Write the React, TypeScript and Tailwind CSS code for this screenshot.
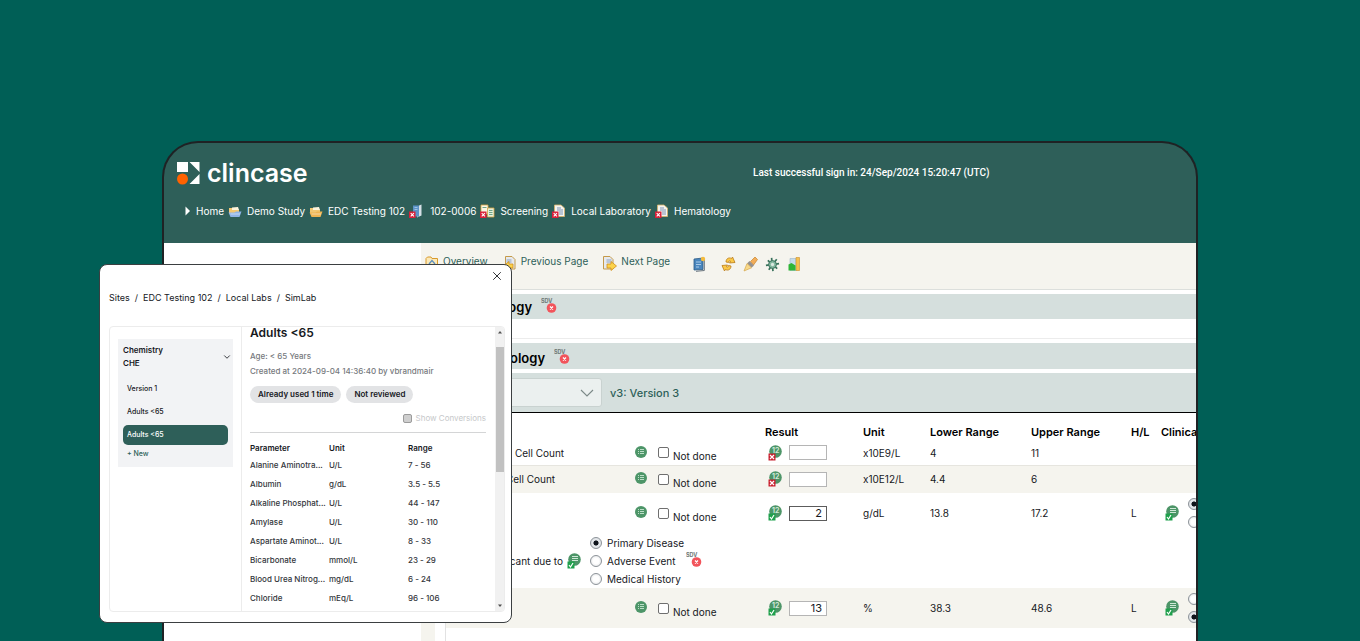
// src/App.tsx
import { useState } from 'react'
import type { ReactNode } from 'react'
import clsx from 'clsx'
import { ChevronDown, X } from 'lucide-react'

type Mark = 'error' | 'ok'

const CRUMBS: { label: string; icon: ReactNode }[] = [
  { label: 'Home',             icon: <ArrowIcon /> },
  { label: 'Demo Study',       icon: <FolderIcon front="#8fb4e8" /> },
  { label: 'EDC Testing 102',  icon: <FolderIcon front="#f0b552" /> },
  { label: '102-0006',         icon: <PatientIcon /> },
  { label: 'Screening',        icon: <VisitIcon /> },
  { label: 'Local Laboratory', icon: <FormIcon /> },
  { label: 'Hematology',       icon: <FormIcon /> },
]

const PARAMETERS = [
  ['Alanine Aminotra...', 'U/L', '7 - 56'],
  ['Albumin', 'g/dL', '3.5 - 5.5'],
  ['Alkaline Phosphat...', 'U/L', '44 - 147'],
  ['Amylase', 'U/L', '30 - 110'],
  ['Aspartate Aminot...', 'U/L', '8 - 33'],
  ['Bicarbonate', 'mmol/L', '23 - 29'],
  ['Blood Urea Nitrog...', 'mg/dL', '6 - 24'],
  ['Chloride', 'mEq/L', '96 - 106'],
]

export default function App() {
  return (
    <div className="relative flex h-screen flex-col overflow-hidden bg-[#005f56] px-4 pt-[141px] font-['Inter',sans-serif] text-[11px] leading-4 text-[#16181d]">
      <div className="relative mx-auto flex w-full max-w-[1036px] flex-1 flex-col">
        <div className="flex min-h-0 flex-1 flex-col overflow-hidden rounded-t-[36px] border-2 border-b-0 border-[#1f2224] bg-[#2e5f59]">
          <Header />
          <div className="flex min-h-0 flex-1 bg-white">
            <aside className="w-[257px] shrink-0" />
            <main className="flex min-w-0 flex-1 flex-col bg-[#f5f4ee]">
              <Toolbar />
              <Forms />
            </main>
          </div>
        </div>
        <LabDialog />
      </div>
    </div>
  )
}

// ── Header ────────────────────────────────────────────────────────
function Header() {
  return (
    <header className="h-[100px] shrink-0 pl-[13px] text-[10px] text-white">
      <div className="flex items-center pt-4">
        <div className="flex w-[576px] shrink-0 items-center gap-[7px]">
          <LogoMark />
          <span className="text-[25px] leading-7 font-semibold">clincase</span>
        </div>
        <p className="font-['Roboto',sans-serif] font-medium whitespace-nowrap">Last successful sign in: 24/Sep/2024 15:20:47 (UTC)</p>
      </div>
      <nav aria-label="Breadcrumb" className="mt-4 flex items-center gap-1 pl-2">
        {CRUMBS.map(c => (
          <a key={c.label} href="#" className="flex items-center gap-[5px] whitespace-nowrap">
            {c.icon}
            {c.label}
          </a>
        ))}
      </nav>
    </header>
  )
}

// ── Toolbar ───────────────────────────────────────────────────────
function Toolbar() {
  return (
    <div className="flex h-[47px] shrink-0 items-start gap-[14px] border-b border-[#dcdfdc] pt-[10px] pl-1 text-[10px] text-[#2e5f59]">
      <a href="#" className="flex items-start gap-1"><OverviewIcon />Overview</a>
      <a href="#" className="flex items-start gap-1"><PageIcon dir="prev" />Previous Page</a>
      <a href="#" className="flex items-start gap-1"><PageIcon dir="next" />Next Page</a>
      <div className="flex items-center gap-[7px] pt-[3px] pl-2">
        <button aria-label="Notes" className="mr-2"><BookIcon /></button>
        <button aria-label="Refresh"><RefreshIcon /></button>
        <button aria-label="Highlight"><BrushIcon /></button>
        <button aria-label="Settings"><GearIcon /></button>
        <button aria-label="Statistics"><ChartIcon /></button>
      </div>
    </div>
  )
}

// ── Form sections ─────────────────────────────────────────────────
function Forms() {
  return (
    <div className="ml-[14px] flex-1 overflow-hidden bg-white pt-1">
      <SectionBar title="Hematology" className="h-[25px] pl-[21px]" />
      <div className="h-5 border-b border-[#ececec]" />
      <div className="h-1" />
      <SectionBar title="Hematology" className="h-[26px] pt-[3px] pl-[34px]" />
      <div className="mt-1 flex h-10 items-center gap-2 border-b border-black bg-[#d5dfdd] pl-5">
        <div className="relative">
          <select aria-label="Lab version" className="h-[29px] w-[147px] appearance-none rounded-[3px] border border-[#c9d2d0] bg-[#ebf0ef]" />
          <svg viewBox="0 0 14 8" className="pointer-events-none absolute top-[11px] right-2 h-2 w-[14px]">
            <path d="M1 1l6 6 6-6" fill="none" stroke="#7b8987" strokeWidth="1.100" />
          </svg>
        </div>
        <span className="font-medium text-[#2e5f59]">v3: Version 3</span>
      </div>
      <ResultsTable />
    </div>
  )
}

function SectionBar({ title, className }: { title: string; className: string }) {
  return (
    <div className={clsx('flex items-center gap-[9px] bg-[#d5dfdd]', className)}>
      <h2 className="text-[13px] font-semibold text-black">{title}</h2>
      <SdvIcon />
    </div>
  )
}

function ResultsTable() {
  return (
    <div className="ml-[10px] h-full border-l border-[#e2e2e2]">
      <table className="w-[840px] table-fixed border-collapse text-left text-[10px]">
        <colgroup>
          <col className="w-[188px]" />
          <col className="w-[131px]" />
          <col className="w-[98px]" />
          <col className="w-[67px]" />
          <col className="w-[101px]" />
          <col className="w-[100px]" />
          <col className="w-[30px]" />
          <col className="w-[125px]" />
        </colgroup>
        <thead>
          <tr className="h-7 align-bottom text-[11px] text-black *:pb-px *:font-semibold">
            <th />
            <th />
            <th>Result</th>
            <th>Unit</th>
            <th>Lower Range</th>
            <th>Upper Range</th>
            <th>H/L</th>
            <th>Clinically significant</th>
          </tr>
        </thead>
        <tbody>
          <ResultRow name="White Blood Cell Count" mark="error" unit="x10E9/L" lower="4" upper="11" className="h-6" />
          <ResultRow name="Red Blood Cell Count" mark="error" unit="x10E12/L" lower="4.4" upper="6"
            className="h-7 border-t border-[#e6e5df] bg-[#f5f4ee]" />
          <ResultRow name="Hemoglobin" mark="ok" value="2" unit="g/dL" lower="13.8" upper="17.2" flag="L" significant="yes" className="h-10" />
          <DueToRow />
          <ResultRow name="Hematocrit" mark="ok" value="13" unit="%" lower="38.3" upper="48.6" flag="L" significant="no" className="h-10 bg-[#f5f4ee]" />
        </tbody>
      </table>
    </div>
  )
}

function ResultRow({ name, mark, value = '', unit, lower, upper, flag, significant, className }: {
  name: string
  mark: Mark
  value?: string
  unit: string
  lower: string
  upper: string
  flag?: string
  significant?: 'yes' | 'no'
  className: string
}) {
  return (
    <tr className={className}>
      <td className="pl-[9px] whitespace-nowrap">{name}</td>
      <td>
        <div className="flex items-center gap-[10px]">
          <ListIcon />
          <label className="flex items-center gap-1 whitespace-nowrap">
            <input type="checkbox" className="h-[11px] w-[11px] appearance-none rounded-[2px] border border-[#6f6f6f] bg-white" />
            <span className="pt-[7px]">Not done</span>
          </label>
        </div>
      </td>
      <td>
        <div className="flex items-center gap-[7px] pl-[3px]">
          <StatusIcon mark={mark} glyph="12" />
          <input aria-label={`${name} result`} defaultValue={value}
            className={clsx('h-[15px] w-[38px] border bg-white px-1 text-right text-[11px]', value === '2' ? 'border-[#5c5c5c]' : 'border-[#b5b5b5]')} />
        </div>
      </td>
      <td>{unit}</td>
      <td>{lower}</td>
      <td>{upper}</td>
      <td>{flag}</td>
      <td>
        {significant && (
          <div className="flex items-center gap-[9px] pl-1">
            <StatusIcon mark="ok" glyph="list" />
            <div className="flex flex-col gap-[6px]">
              <RadioDot name={name} label="Yes" checked={significant === 'yes'} />
              <RadioDot name={name} label="No" checked={significant === 'no'} />
            </div>
          </div>
        )}
      </td>
    </tr>
  )
}

function DueToRow() {
  return (
    <tr className="h-[55px]">
      <td colSpan={8}>
        <div className="flex items-center gap-[9px]">
          <div className="flex w-[135px] shrink-0 items-center justify-end gap-1">
            <span className="whitespace-nowrap">Clinically significant due to</span>
            <StatusIcon mark="ok" glyph="list" />
          </div>
          <div className="flex items-center gap-[2px]">
            <div className="flex flex-col gap-[2px]">
              {['Primary Disease', 'Adverse Event', 'Medical History'].map((cause, i) => (
                <label key={cause} className="flex items-center gap-[5px] whitespace-nowrap">
                  <RadioDot name="cause" checked={i === 0} />
                  {cause}
                </label>
              ))}
            </div>
            <SdvIcon />
          </div>
        </div>
      </td>
    </tr>
  )
}

function RadioDot({ name, label, checked }: { name: string; label?: string; checked?: boolean }) {
  return (
    <input type="radio" name={name} aria-label={label} defaultChecked={checked}
      className="h-3 w-3 appearance-none rounded-full border border-[#8d9399] bg-[radial-gradient(circle,#ffffff_40%,#d9dcdf_100%)] checked:bg-[radial-gradient(circle,#10151c_30%,#e8ebee_42%,#d3d8dd_100%)]" />
  )
}

// ── Lab dialog ────────────────────────────────────────────────────
function LabDialog() {
  const [active, setActive] = useState(2)

  return (
    <div role="dialog" aria-label="SimLab"
      className="absolute top-[123px] -left-[63px] flex h-[359px] w-[413px] flex-col rounded-lg border border-[#3b3f41] bg-white pr-[6px] pb-[10px] pl-[9px] text-[8px] leading-3">
      <button aria-label="Close" className="absolute top-1 right-[7px]"><X className="h-[14px] w-[14px]" strokeWidth={1.5} /></button>

      <nav aria-label="Lab path" className="mt-[27px] flex gap-[5px] text-[9px]">
        <a href="#">Sites</a><span>/</span>
        <a href="#">EDC Testing 102</a><span>/</span>
        <a href="#">Local Labs</a><span>/</span>
        <a href="#">SimLab</a>
      </nav>

      <div className="mt-[22px] flex min-h-0 flex-1 overflow-hidden rounded-[4px] border border-[#ececec]">
        <div className="w-[132px] shrink-0 border-r border-[#ececec] px-2 pt-3">
          <div className="h-32 bg-[#f2f3f5] px-[5px] pt-[5px]">
            <button className="flex w-full items-center justify-between text-left leading-[13px] font-semibold">
              <span>Chemistry<br />CHE</span>
              <ChevronDown className="-mr-1 h-[10px] w-[10px]" strokeWidth={2} />
            </button>
            <div className="mt-[9px] flex flex-col gap-[3px] text-[7px]">
              {['Version 1', 'Adults <65', 'Adults <65'].map((label, i) => (
                <button key={i} onClick={() => setActive(i)}
                  className={clsx('h-5 rounded-[5px] px-1 text-left font-medium', active === i && 'bg-[#2e5f59] text-white')}>
                  {label}
                </button>
              ))}
              <button className="px-1 text-left font-medium text-[#2e5f59]">+ New</button>
            </div>
          </div>
        </div>

        <div className="min-w-0 flex-1 pr-[9px] pl-2">
          <h3 className="text-[12px] font-semibold">Adults &lt;65</h3>
          <p className="mt-[11px] font-medium text-[#76797d]">Age: &lt; 65 Years</p>
          <p className="mt-[3px] font-medium text-[#76797d]">Created at 2024-09-04 14:36:40 by vbrandmair</p>
          <div className="mt-[9px] flex gap-[5px] font-semibold">
            <span className="rounded-full bg-[#e2e3e5] px-2 py-[3px] leading-[11px]">Already used 1 time</span>
            <span className="rounded-full bg-[#e2e3e5] px-2 py-[3px] leading-[11px]">Not reviewed</span>
          </div>
          <label className="mt-[9px] flex items-center justify-end gap-1 text-[#c6c8ca]">
            <input type="checkbox" disabled className="h-[9px] w-[9px] appearance-none rounded-[2px] border border-[#9b9b9b] bg-[#cfcfcf]" />
            Show Conversions
          </label>
          <table className="mt-2 w-full table-fixed border-t border-[#d4d5d6] text-left">
            <thead>
              <tr className="h-[23px] align-bottom *:pb-[2px] *:font-semibold">
                <th className="w-[79px]">Parameter</th>
                <th className="w-[79px]">Unit</th>
                <th>Range</th>
              </tr>
            </thead>
            <tbody>
              {PARAMETERS.map(([name, unit, range]) => (
                <tr key={name} className="h-[19px] font-medium text-[#33363b]">
                  <td className="whitespace-nowrap">{name}</td>
                  <td>{unit}</td>
                  <td>{range}</td>
                </tr>
              ))}
            </tbody>
          </table>
        </div>

        {/* scrollbar */}
        <div className="flex w-[9px] shrink-0 flex-col items-center bg-[#f1f1f1]">
          <svg viewBox="0 0 8 20" className="h-5 w-2"><path d="M2 6.500 4 4l2 2.500z" fill="#505050" /></svg>
          <div className="h-[125px] w-2 bg-[#c1c1c1]" />
          <svg viewBox="0 0 8 12" className="mt-auto h-3 w-2"><path d="M2 5.500 4 8l2-2.500z" fill="#505050" /></svg>
        </div>
      </div>
    </div>
  )
}

// ── Icons ─────────────────────────────────────────────────────────
function LogoMark() {
  return (
    <svg viewBox="0 0 23 24" className="h-6 w-[23px]">
      <path d="M0 1h11v10H0z" fill="#fff" />
      <circle cx="5.500" cy="18" r="5.500" fill="#ff6200" />
      <path d="M12.500 1H22.500V11zM22.500 13v10H12.500z" fill="#fff" />
    </svg>
  )
}

function ArrowIcon() {
  return (
    <svg viewBox="0 0 6 10" className="h-[10px] w-[6px]"><path d="M0.500 0.500 5 5 0.500 9.500z" fill="#fff" /></svg>
  )
}

function FolderIcon({ front }: { front: string }) {
  return (
    <svg viewBox="0 0 14 14" className="h-[14px] w-[14px]">
      <path d="M1 4h4l1 1.500h5V9H1z" fill="#f3c873" />
      <path d="M4 3.500 10 3l1 3H4z" fill="#fdf4dc" />
      <path d="M0.500 8.500h6L8 7.500h5.500L11.500 13H2.500z" fill={front} />
      <path d="M2.500 10h9.500" stroke="#fff" strokeOpacity="0.500" />
    </svg>
  )
}

function RedMark() {
  return (
    <>
      <path d="M0 7.500h6.500V14H0z" fill="#d9203a" />
      <path d="m1.700 9.200 3.200 3.200m0-3.200-3.200 3.200" stroke="#fff" strokeWidth="1.100" />
    </>
  )
}

function PatientIcon() {
  return (
    <svg viewBox="0 0 14 14" className="mr-[2px] h-[14px] w-[14px]">
      <path d="M4 1.500h6v11H4z" fill="#5b93c7" />
      <path d="m10 1.500 2.500-1v11L8 13.500v-1h2z" fill="#d5e0e6" />
      <path d="M5.500 3.500h3M5.500 5.500h3" stroke="#9cc2e4" />
      <RedMark />
    </svg>
  )
}

function VisitIcon() {
  return (
    <svg viewBox="0 0 15 14" className="h-[14px] w-[15px]">
      <path d="M1 1h7v9H1z" fill="#fbf6e4" stroke="#d9a441" strokeWidth="0.800" />
      <path d="M7.500 4h6.500v9H7.500z" fill="#e4f0dc" stroke="#d9a441" strokeWidth="0.800" />
      <path d="M2.500 3.500h4M9 6.500h3.500M9 8.500h3.500M9 10.500h3.500" stroke="#6fa487" />
      <RedMark />
    </svg>
  )
}

function FormIcon() {
  return (
    <svg viewBox="0 0 14 14" className="h-[14px] w-[14px]">
      <path d="M2.500 1h6.500l3.500 3v8.500h-10z" fill="#f6f4ee" stroke="#d9b26a" strokeWidth="0.800" />
      <path d="M5 4h4M5 6h6M7 8h4M7 10h4" stroke="#7c93b8" />
      <RedMark />
    </svg>
  )
}

function OverviewIcon() {
  return (
    <svg viewBox="0 0 14 14" className="mt-px h-[14px] w-[14px]">
      <path d="M1 4.500 2.500 3H6l1 1.500h5.500V12H1z" fill="#fbe9b8" stroke="#d99a2b" />
      <path d="m4 10 3-3.500 3 3.500" fill="none" stroke="#5d8fbf" strokeWidth="1.300" />
    </svg>
  )
}

function PageIcon({ dir }: { dir: 'prev' | 'next' }) {
  return (
    <svg viewBox="0 0 15 16" className="mt-[2px] h-4 w-[15px]">
      <path d={dir === 'next' ? 'M1.500 1.500H8L11 4.500V14H1.500z' : 'M3.500 1.500H10L13 4.500V14H3.500z'} fill="#e6e9ee" stroke="#c49a4a" />
      <path d="M4.500 5h5M4.500 7h5" stroke="#8fa3bf" />
      {dir === 'next'
        ? <path d="M5 9h4V6.500l5.500 4.500L9 15.500V13H5z" fill="#fcd34a" stroke="#d08f1c" strokeWidth="0.800" />
        : <path d="M11 9H7V6.500L1.500 11 7 15.500V13h4z" fill="#fcd34a" stroke="#d08f1c" strokeWidth="0.800" />}
    </svg>
  )
}

function BookIcon() {
  return (
    <svg viewBox="0 0 14 16" className="h-4 w-[14px]">
      <path d="M2 3 11 2v11.500L2 14z" fill="#4a86bd" stroke="#2c5c86" strokeWidth="0.800" />
      <path d="M12.300 3v11.500L4 15.300" fill="none" stroke="#68737d" />
      <path d="M4 6h5M4 8.500h5M4 11h3" stroke="#a9cbe8" />
      <circle cx="11" cy="3" r="2.200" fill="#f3bb3e" />
    </svg>
  )
}

function RefreshIcon() {
  return (
    <svg viewBox="0 0 15 16" className="h-4 w-[15px]">
      <path d="M5 6C5 2.500 8 1 10.500 2.500L11.500 1l2.500 5.500-5.500.500 1-1.800C8.500 4.500 7.500 5 7.500 6.500z" fill="#fbc948" stroke="#b97a18" strokeWidth="0.800" />
      <path d="M10 10c0 3.500-3 5-5.500 3.500L3.500 15 1 9.500 6.500 9l-1 1.800c1 .7 2 .2 2-1.300z" fill="#fbc948" stroke="#b97a18" strokeWidth="0.800" />
    </svg>
  )
}

function BrushIcon() {
  return (
    <svg viewBox="0 0 15 16" className="h-4 w-[15px]">
      <path d="M7.500 5.500 12 1l2.500 2.500-4 5.500z" fill="#f2ad5a" stroke="#c9852b" strokeWidth="0.700" />
      <path d="m6.500 5 4.500 4.500-2.500 2.300L4 7.500z" fill="#96918e" />
      <path d="m4 7.500 4.500 4.300L1 15z" fill="#f8d98a" stroke="#d6a74c" strokeWidth="0.700" />
    </svg>
  )
}

function GearIcon() {
  return (
    <svg viewBox="0 0 16 16" className="h-[15px] w-[15px]">
      <path d="M7 1l1.500 14M1 9l14-2M3 3.500l10 9M12.500 2.500 4 13.500" stroke="#37705a" strokeWidth="1.800" />
      <circle cx="8" cy="8" r="4.200" fill="#82b59e" stroke="#37705a" />
      <circle cx="8" cy="8" r="1.800" fill="#d9e8df" />
    </svg>
  )
}

function ChartIcon() {
  return (
    <svg viewBox="0 0 14 16" className="h-4 w-[14px]">
      <path d="M3 2.500h6v12H3z" fill="#c4dcec" stroke="#9db6c8" strokeWidth="0.600" />
      <path d="M9 1.500h3.500v13H9z" fill="#f5c04e" stroke="#c98f2a" strokeWidth="0.600" />
      <path d="M1.500 8.500 4.500 7 8.500 9.500v5h-7z" fill="#2fb536" />
    </svg>
  )
}

function SdvIcon() {
  return (
    <svg viewBox="0 0 18 18" className="h-[18px] w-[18px] shrink-0">
      <text x="0" y="5" fontSize="5.500" fontWeight="700" fill="#6f7977">SDV</text>
      <circle cx="10.500" cy="10" r="4.800" fill="#f2545b" />
      <path d="m9 8.500 3 3m0-3-3 3" stroke="#fff" strokeWidth="1.200" />
    </svg>
  )
}

function ListIcon() {
  return (
    <svg viewBox="0 0 14 14" className="h-[14px] w-[14px] shrink-0">
      <circle cx="7" cy="6" r="6" fill="#4d9568" />
      <path d="M4 3.500h1m1 0h4M4 5.500h1m1 0h4M4 7.500h1m1 0h4" stroke="#d9f0e0" strokeWidth="0.800" />
    </svg>
  )
}

function StatusIcon({ mark, glyph }: { mark: Mark; glyph: '12' | 'list' }) {
  return (
    <svg viewBox="0 0 14 16" className="h-4 w-[14px] shrink-0">
      <circle cx="7.500" cy="6.500" r="6.300" fill="#4d9568" />
      {glyph === '12'
        ? <text x="4" y="8" fontSize="7" fontWeight="700" fill="#cfe8d7">12</text>
        : <path d="M5 3.500h6M5 5.500h6M5 7.500h6" stroke="#cfe8d7" />}
      <path d="M0.500 8.500h7v7h-7z" fill={mark === 'error' ? '#c9202f' : '#1fa04c'} />
      {mark === 'error'
        ? <path d="m2 10 4 4m0-4-4 4" stroke="#fff" strokeWidth="1.200" />
        : <path d="m2 12 1.500 2L6 10" fill="none" stroke="#fff" strokeWidth="1.200" />}
    </svg>
  )
}
